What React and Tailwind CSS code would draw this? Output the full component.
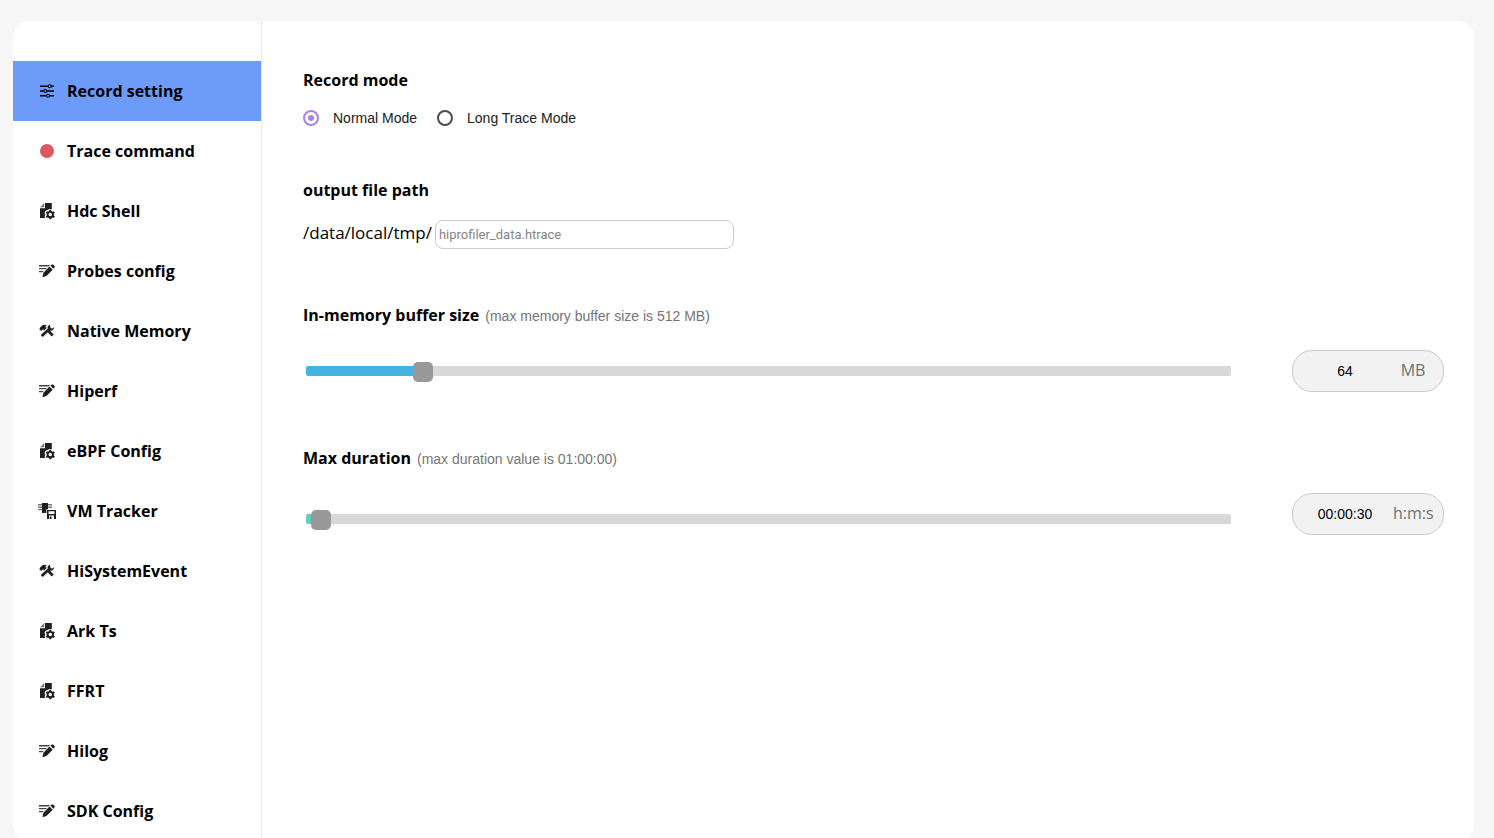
import { useState } from 'react';

const SlidersIcon = () => (
  <svg viewBox="0 0 20 20" className="size-5 shrink-0" fill="none" stroke="currentColor" strokeWidth="1.5" aria-hidden="true">
    <path d="M3 5.300h8.200M14.400 5.300H17M3 10h3.700M9.900 10H17M3 14.800h6.400M12.600 14.800H17" />
    <circle cx="12.800" cy="5.300" r="1.500" strokeWidth="1.100" />
    <circle cx="8.300" cy="10" r="1.500" strokeWidth="1.100" />
    <circle cx="11" cy="14.800" r="1.500" strokeWidth="1.100" />
  </svg>
);

const RecordIcon = () => (
  <svg viewBox="0 0 20 20" className="size-5 shrink-0" aria-hidden="true">
    <circle cx="10" cy="10" r="7" fill="#db5860" />
  </svg>
);

const FileIcon = () => (
  <svg viewBox="0 0 20 20" className="size-5 shrink-0" fill="#1f1f1f" aria-hidden="true">
    <path d="M8 2h6.800v6.200H12L8.500 9.800 7.500 12l.8 1.800L7.500 15.500 8.500 17H3V7.200h5z" />
    <path d="M7.200 2v4.300H3z" fill="#777" />
    <circle cx="13.300" cy="13.600" r="2.700" fill="none" stroke="#1f1f1f" strokeWidth="1.900" />
    <path d="M12.300 9h2v2h-2zM12.300 16.200h2v2h-2zM8.800 11.900l1-1.700 1.700 1-1 1.700zM15.200 15.900l1-1.700 1.700 1-1 1.700zM8.800 15.300l1.700-1 1 1.700-1.700 1zM15.200 11.300l1.700-1 1 1.700-1.700 1z" />
  </svg>
);

const EditIcon = () => (
  <svg viewBox="0 0 20 20" className="size-5 shrink-0" fill="#1f1f1f" aria-hidden="true">
    <path d="M2 4h11L11.500 5.500H2zM2 7h8.200L8.700 8.300H2zM2 10h4.800l-1.300 1.200H2z" fill="#444" />
    <path d="M12.500 5.500l3.200 3.200-6.300 6.200-4 1.400 1-4.600zM13.400 4.700l1.300-.9c.5-.5 1.200-.5 1.700 0l1 1c.5.5.5 1.200 0 1.700l-.9 1.200z" />
  </svg>
);

const ToolsIcon = () => (
  <svg viewBox="0 0 20 20" className="size-5 shrink-0" fill="#1f1f1f" aria-hidden="true">
    <path d="M2.300 8.300l1.200-2.200 2.700-2.300 3.600.4-1.500 1.500 1.300 1.300-2.400 2.500-1.300-1.300-1.700 1.700z" />
    <path d="M9.200 9.700l2-2 5.500 5.800-2 2z" />
    <path d="M13.200 3.700c-2 .3-3.100 2.200-2.500 4l-7 6.400 2 2 6.900-6.600c2.200.7 4.400-.7 4.500-3.200l-2.200 1.400-1.900-1.800z" />
  </svg>
);

const TrackerIcon = () => (
  <svg viewBox="0 0 20 20" className="size-5 shrink-0" fill="#1f1f1f" aria-hidden="true">
    <path d="M1 3h4v1.500H1zM1 5.500h4V7H1zM1 8h4v1.300H1zM11 3h4v1.500h-4zM11 5.500h4V7h-4z" fill="#777" />
    <path d="M5 2h6v6.300H9.300V12H5z" />
    <path fillRule="evenodd" d="M10 9h9v9h-9zM11.500 10.300v2.700h6v-2.700zM12 14.500V18h5v-3.500z" />
    <path d="M12.700 15.500h1.800V18h-1.800z" />
  </svg>
);

const menu = [
  { title: 'Record setting', icon: SlidersIcon },
  { title: 'Trace command', icon: RecordIcon },
  { title: 'Hdc Shell', icon: FileIcon },
  { title: 'Probes config', icon: EditIcon },
  { title: 'Native Memory', icon: ToolsIcon },
  { title: 'Hiperf', icon: EditIcon },
  { title: 'eBPF Config', icon: FileIcon },
  { title: 'VM Tracker', icon: TrackerIcon },
  { title: 'HiSystemEvent', icon: ToolsIcon },
  { title: 'Ark Ts', icon: FileIcon },
  { title: 'FFRT', icon: FileIcon },
  { title: 'Hilog', icon: EditIcon },
  { title: 'SDK Config', icon: EditIcon },
];

function formatTime(seconds) {
  const parts = [Math.floor(seconds / 3600), Math.floor(seconds / 60) % 60, seconds % 60];
  return parts.map((n) => String(n).padStart(2, '0')).join(':');
}

function ModeRadio({ value, label, mode, onChange }) {
  return (
    <label className="flex items-center gap-[14px] text-sm text-[#212121]">
      <input
        type="radio"
        name="mode"
        value={value}
        checked={mode === value}
        onChange={() => onChange(value)}
        className="grid size-4 appearance-none place-items-center rounded-full border-2 border-[#4d4d4d] checked:border-[#b082e0] checked:before:size-[6px] checked:before:rounded-full checked:before:bg-[#b082e0]"
      />
      {label}
    </label>
  );
}

function Slider({ id, min, max, value, color, onChange }) {
  const ratio = (value - min) / (max - min);
  return (
    <input
      id={id}
      type="range"
      min={min}
      max={max}
      value={value}
      onChange={(e) => onChange(Number(e.target.value))}
      style={{ '--fill': `calc(10px + (100% - 20px) * ${ratio})`, '--color': color }}
      className="h-5 min-w-0 flex-1 appearance-none bg-transparent [&::-webkit-slider-runnable-track]:h-[10px] [&::-webkit-slider-runnable-track]:rounded-[2px] [&::-webkit-slider-runnable-track]:bg-[linear-gradient(to_right,var(--color)_var(--fill),#d8d8d8_var(--fill))] [&::-webkit-slider-thumb]:-mt-1 [&::-webkit-slider-thumb]:size-5 [&::-webkit-slider-thumb]:appearance-none [&::-webkit-slider-thumb]:rounded-[5px] [&::-webkit-slider-thumb]:bg-[#999999]"
    />
  );
}

function ValueBox({ label, value, unit }) {
  return (
    <div className="flex h-[42px] w-[152px] shrink-0 items-center rounded-[20px] border border-[#c8cbcc] bg-[#f2f2f2] pr-[10px] pl-1">
      <input
        type="text"
        aria-label={label}
        value={value}
        readOnly
        className="min-w-0 flex-1 bg-transparent text-center text-sm text-black outline-none"
      />
      <span className="w-10 pb-[2px] text-center font-['Open_Sans',sans-serif] text-base text-[#6b7176]">{unit}</span>
    </div>
  );
}

export default function App() {
  const [current, setCurrent] = useState('Record setting');
  const [mode, setMode] = useState('normal');
  const [path, setPath] = useState('');
  const [bufferSize, setBufferSize] = useState(64);
  const [duration, setDuration] = useState(30);

  const heading = "font-['Open_Sans',sans-serif] text-base font-bold leading-6 text-black";
  const hint = 'text-sm text-[#757575]';

  return (
    <div className="h-screen overflow-hidden bg-[#f6f6f6] pt-[21px] pr-5 pl-[13px] font-['Liberation_Sans',Arial,sans-serif]">
      <div className="flex overflow-hidden rounded-2xl bg-white">
        <nav className="w-[249px] shrink-0 border-r border-[#e8e8e8] pt-10">
          {menu.map(({ title, icon: Icon }) => (
            <button
              key={title}
              type="button"
              onClick={() => setCurrent(title)}
              className={`flex h-[60px] w-full items-center gap-[10px] pl-6 font-['Open_Sans',sans-serif] text-base font-bold text-black ${current === title ? 'bg-[#6c9bfa]' : ''}`}
            >
              <Icon />
              {title}
            </button>
          ))}
        </nav>

        <main className="min-w-0 flex-1 pt-[47px] pr-[30px] pl-[41px]">
          <section>
            <h2 className={heading}>Record mode</h2>
            <div className="mt-4 flex items-center gap-5">
              <ModeRadio value="normal" label="Normal Mode" mode={mode} onChange={setMode} />
              <ModeRadio value="long" label="Long Trace Mode" mode={mode} onChange={setMode} />
            </div>
          </section>

          <section className="mt-[50px]">
            <h2 className={heading}>output file path</h2>
            <div className="mt-[18px] flex items-center gap-[3px]">
              <label htmlFor="path" className="pb-1 font-['Open_Sans',sans-serif] text-[17px] leading-6 text-black">/data/local/tmp/</label>
              <input
                id="path"
                type="text"
                placeholder="hiprofiler_data.htrace"
                value={path}
                onChange={(e) => setPath(e.target.value)}
                className="h-[29px] w-[299px] rounded-lg border border-[#cccccc] px-[3px] font-[Roboto,sans-serif] text-[13px] placeholder:text-[#858585]"
              />
            </div>
          </section>

          <section className="mt-[54px]">
            <div className="flex items-baseline gap-[6px]">
              <h2 className={heading}><label htmlFor="buffer">In-memory buffer size</label></h2>
              <span className={hint}>(max memory buffer size is 512 MB)</span>
            </div>
            <div className="mt-[23px] flex items-center gap-[61px] pl-[3px]">
              <Slider id="buffer" min={4} max={512} value={bufferSize} color="#46b1e3" onChange={setBufferSize} />
              <ValueBox label="Buffer size" value={bufferSize} unit="MB" />
            </div>
          </section>

          <section className="mt-[54px]">
            <div className="flex items-baseline gap-[6px]">
              <h2 className={heading}><label htmlFor="duration">Max duration</label></h2>
              <span className={hint}>(max duration value is 01:00:00)</span>
            </div>
            <div className="mt-[23px] flex items-center gap-[61px] pl-[3px]">
              <div className="flex flex-1 pt-[10px]">
                <Slider id="duration" min={10} max={3600} value={duration} color="#61cfbe" onChange={setDuration} />
              </div>
              <ValueBox label="Duration" value={formatTime(duration)} unit="h:m:s" />
            </div>
          </section>
        </main>
      </div>
    </div>
  );
}
